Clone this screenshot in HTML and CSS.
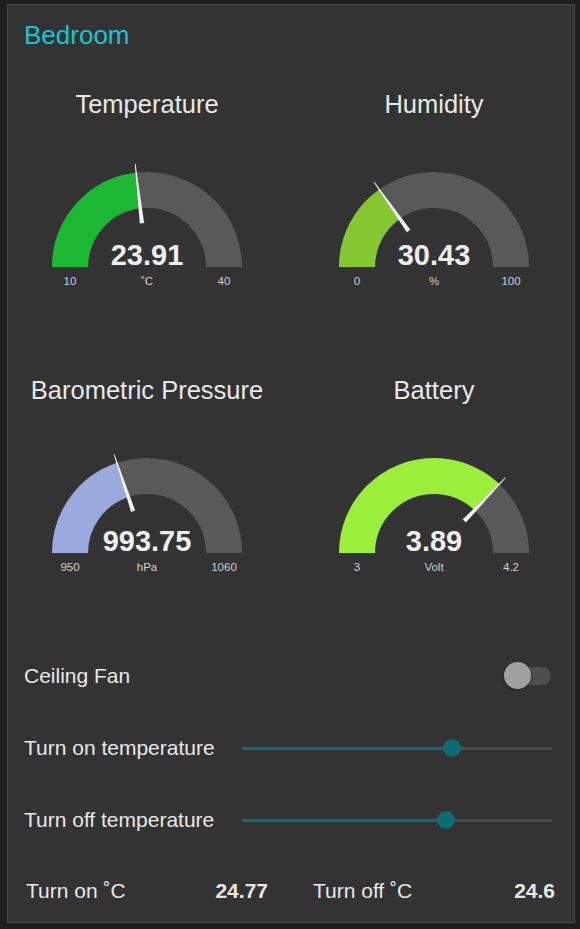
FILE: index.html
```html
<!DOCTYPE html>
<html lang="en">
<head>
  <meta charset="UTF-8">
  <title>Bedroom</title>
  <link rel="stylesheet" href="styles.css">
</head>
<body>

  <div class="panel">
    <h1 class="panel-title">Bedroom</h1>

    <div class="gauges">

      <div class="gauge">
        <h2 class="gauge-title">Temperature</h2>
        <svg class="gauge-svg" width="278" height="175" viewBox="0 0 278 175">
          <path class="arc-bg" d="M62 148 A77 77 0 0 1 216 148" />
          <path class="arc-val" d="M62 148 A77 77 0 0 1 216 148" pathLength="100" stroke="#1cb833" stroke-dasharray="46.37 200" />
          <polygon class="needle" points="95,145.8 35,147.6 35,148.4 95,150.2" transform="rotate(83.46 139 148)" />
          <text class="g-value" x="139" y="146">23.91</text>
          <text class="g-small" x="62" y="166">10</text>
          <text class="g-small" x="139" y="166">˚C</text>
          <text class="g-small" x="216" y="166">40</text>
        </svg>
      </div>

      <div class="gauge">
        <h2 class="gauge-title">Humidity</h2>
        <svg class="gauge-svg" width="278" height="175" viewBox="0 0 278 175">
          <path class="arc-bg" d="M62 148 A77 77 0 0 1 216 148" />
          <path class="arc-val" d="M62 148 A77 77 0 0 1 216 148" pathLength="100" stroke="#86c832" stroke-dasharray="30.43 200" />
          <polygon class="needle" points="95,145.8 35,147.6 35,148.4 95,150.2" transform="rotate(54.77 139 148)" />
          <text class="g-value" x="139" y="146">30.43</text>
          <text class="g-small" x="62" y="166">0</text>
          <text class="g-small" x="139" y="166">%</text>
          <text class="g-small" x="216" y="166">100</text>
        </svg>
      </div>

      <div class="gauge">
        <h2 class="gauge-title">Barometric Pressure</h2>
        <svg class="gauge-svg" width="278" height="175" viewBox="0 0 278 175">
          <path class="arc-bg" d="M62 148 A77 77 0 0 1 216 148" />
          <path class="arc-val" d="M62 148 A77 77 0 0 1 216 148" pathLength="100" stroke="#9aaadd" stroke-dasharray="39.77 200" />
          <polygon class="needle" points="95,145.8 35,147.6 35,148.4 95,150.2" transform="rotate(71.59 139 148)" />
          <text class="g-value" x="139" y="146">993.75</text>
          <text class="g-small" x="62" y="166">950</text>
          <text class="g-small" x="139" y="166">hPa</text>
          <text class="g-small" x="216" y="166">1060</text>
        </svg>
      </div>

      <div class="gauge">
        <h2 class="gauge-title">Battery</h2>
        <svg class="gauge-svg" width="278" height="175" viewBox="0 0 278 175">
          <path class="arc-bg" d="M62 148 A77 77 0 0 1 216 148" />
          <path class="arc-val" d="M62 148 A77 77 0 0 1 216 148" pathLength="100" stroke="#9bee39" stroke-dasharray="74.17 200" />
          <polygon class="needle" points="95,145.8 35,147.6 35,148.4 95,150.2" transform="rotate(133.5 139 148)" />
          <text class="g-value" x="139" y="146">3.89</text>
          <text class="g-small" x="62" y="166">3</text>
          <text class="g-small" x="139" y="166">Volt</text>
          <text class="g-small" x="216" y="166">4.2</text>
        </svg>
      </div>

    </div>

    <div class="controls">
      <div class="row">
        <span class="row-label">Ceiling Fan</span>
        <div class="switch">
          <div class="switch-knob"></div>
        </div>
      </div>

      <div class="row">
        <span class="row-label slider-label">Turn on temperature</span>
        <div class="slider">
          <div class="slider-fill" style="width: 67.7%;"></div>
          <div class="slider-thumb" style="left: 67.7%;"></div>
        </div>
      </div>

      <div class="row">
        <span class="row-label slider-label">Turn off temperature</span>
        <div class="slider">
          <div class="slider-fill" style="width: 65.8%;"></div>
          <div class="slider-thumb" style="left: 65.8%;"></div>
        </div>
      </div>

      <div class="readouts">
        <div class="readout">
          <span>Turn on ˚C</span>
          <b>24.77</b>
        </div>
        <div class="readout">
          <span>Turn off ˚C</span>
          <b>24.6</b>
        </div>
      </div>
    </div>
  </div>

</body>
</html>
```

FILE: styles.css
```css
:root {
  --fondo: #1e1e1e;
  --panel: #333333;
  --borde: #4a4a4a;
  --texto: #e8e8e8;
  --cian: #19c3d5;
  --teal: #0d6b72;
  --gris-arco: #595959;
}

body {
  margin: 0;
  padding: 4px 5px 0 7px;
  background-color: var(--fondo);
  font-family: 'Liberation Sans', Arial, sans-serif;
  color: var(--texto);
}

.panel {
  box-sizing: border-box;
  height: 919px;
  background-color: var(--panel);
  border: 1px solid var(--borde);
  overflow: hidden;
}

.panel-title {
  margin: 0;
  padding: 15px 16px 0;
  font-size: 26px;
  line-height: 30px;
  font-weight: normal;
  color: var(--cian);
}

.gauges {
  display: grid;
  grid-template-columns: 278px 278px;
  column-gap: 9px;
}

.gauge {
  height: 286px;
  padding-top: 39px;
  box-sizing: border-box;
  display: flex;
  flex-direction: column;
  align-items: center;
}

.gauge-title {
  margin: 0;
  font-size: 25.5px;
  line-height: 30px;
  font-weight: normal;
  color: var(--texto);
  white-space: nowrap;
}

.gauge-svg {
  display: block;
}

.arc-bg,
.arc-val {
  fill: none;
  stroke-width: 36;
}

.arc-bg {
  stroke: var(--gris-arco);
}

.needle {
  fill: #f2f2f2;
}

.g-value {
  font-family: 'Liberation Sans', Arial, sans-serif;
  font-size: 29px;
  font-weight: bold;
  fill: #eeeeee;
  text-anchor: middle;
}

.g-small {
  font-family: 'Liberation Sans', Arial, sans-serif;
  font-size: 11.5px;
  fill: #d0d0d0;
  text-anchor: middle;
}

.controls {
  margin-top: 18px;
}

.row {
  height: 72px;
  padding: 0 22px 0 16px;
  display: flex;
  align-items: center;
}

.row-label {
  flex: 1;
  font-size: 21px;
  color: var(--texto);
}

.slider-label {
  flex: 0 0 218px;
}

.switch {
  position: relative;
  width: 47px;
  height: 18px;
  margin-right: 1px;
  border-radius: 9px;
  background-color: #4d4d4d;
}

.switch-knob {
  position: absolute;
  left: 0;
  top: -5px;
  width: 27px;
  height: 27px;
  border-radius: 50%;
  background-color: #a0a0a0;
  box-shadow: 0 1px 3px rgba(0,0,0,0.4);
}

.slider {
  position: relative;
  flex: 1;
  height: 3px;
  background-color: #4b4b4b;
}

.slider-fill {
  height: 100%;
  background-color: var(--teal);
}

.slider-thumb {
  position: absolute;
  top: -8px;
  width: 18px;
  height: 18px;
  margin-left: -9px;
  border-radius: 50%;
  background-color: var(--teal);
}

.readouts {
  display: grid;
  grid-template-columns: 1fr 1fr;
  column-gap: 45px;
  height: 70px;
  padding: 0 19px 0 18px;
  align-items: center;
}

.readout {
  display: flex;
  justify-content: space-between;
  font-size: 21px;
}

.readout b {
  font-weight: bold;
}
```
